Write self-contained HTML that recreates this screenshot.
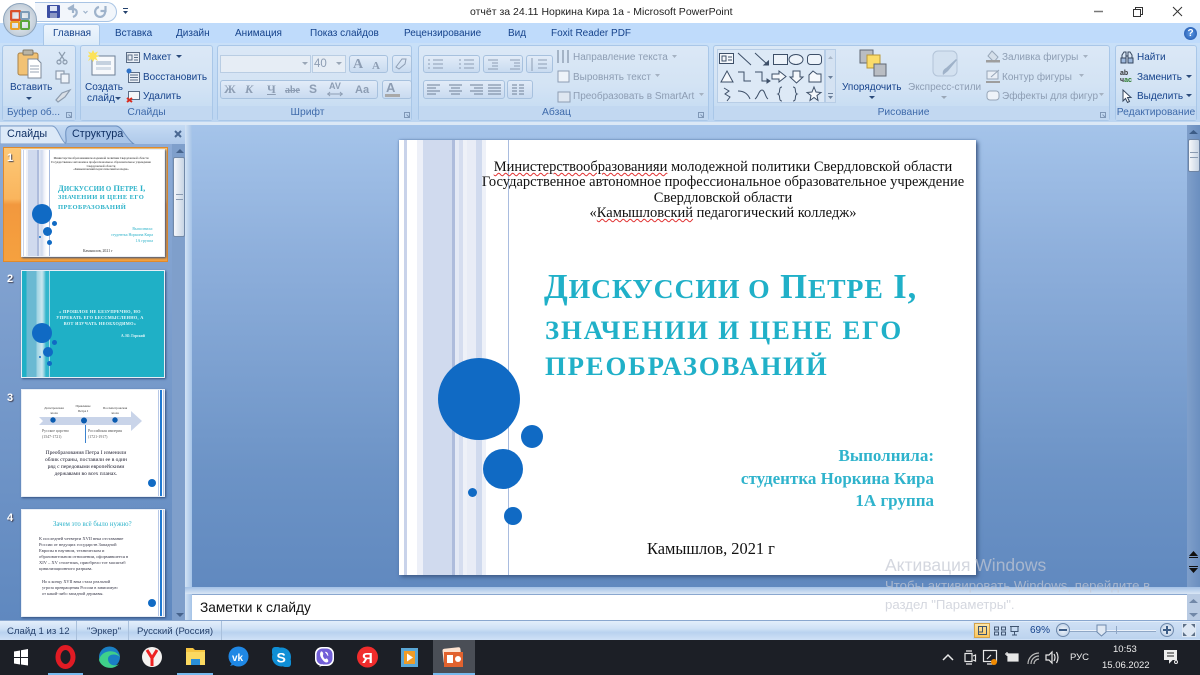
<!DOCTYPE html>
<html><head><meta charset="utf-8"><style>
*{box-sizing:border-box}
html,body{margin:0;padding:0;width:1200px;height:675px;overflow:hidden;background:#fff;font-family:"Liberation Sans",sans-serif}
.a{position:absolute}
.t{position:absolute;white-space:nowrap;font-size:10px;color:#15428b;line-height:13px}
.g{color:#8d9db3}
.grp{position:absolute;top:45px;height:76px;border:1px solid #a9c7e8;border-radius:3px;background:linear-gradient(#dbe8f6 0,#d3e3f4 55%,#c9def3 80%,#c5daf1 100%)}
.lb{position:absolute;left:0;right:0;bottom:0;height:14px;text-align:center;font-size:10.300px;line-height:14px;color:#3e6aaa;background:#c2d8f1;white-space:nowrap}
.tab{position:absolute;top:27px;font-size:10px;color:#15428b;line-height:13px;white-space:nowrap}
.btn{position:absolute;border:1px solid #a7c1de;border-radius:3px;background:linear-gradient(#e2ecf8,#c9dbf0)}
.ser{font-family:"Liberation Serif",serif}
.sl{position:absolute;left:21px;width:144px;height:108px;background:#fff;border:1px solid #e8eef6;box-shadow:1px 1px 2px #33507f}
.n{position:absolute;left:7px;font-size:11px;font-weight:bold;color:#fff;text-shadow:1px 1px 1px #445}
.c{position:absolute;border-radius:50%;background:#106ac4}
</style></head><body>

<!-- ribbon bg -->
<div class="a" style="left:0;top:23px;width:1200px;height:20px;background:#bfdbfb"></div>
<div class="a" style="left:0;top:43px;width:1200px;height:81px;background:linear-gradient(#c9e0f8,#bcd5f1)"></div>

<!-- title bar -->
<div class="a" style="left:35px;top:2px;width:82px;height:20px;border:1px solid #a9c4e4;border-left:0;border-radius:0 11px 11px 0;background:#f2f6fb"></div>
<div class="a" style="left:3px;top:3px;width:34px;height:34px;border-radius:50%;background:radial-gradient(#f4f6f8,#aebdcc);border:1px solid #8ca3bb"></div>
<svg class="a" style="left:10px;top:10px" width="21" height="21"><rect x="1" y="1" width="9" height="9" rx="1" fill="none" stroke="#d9502a" stroke-width="2.500"/><rect x="11" y="2" width="8" height="7" rx="1" fill="none" stroke="#7d9cb8" stroke-width="2"/><rect x="1" y="12" width="8" height="7" rx="1" fill="none" stroke="#e9a227" stroke-width="2"/><rect x="11" y="11" width="8" height="8" rx="1" fill="none" stroke="#5aa63a" stroke-width="2"/></svg>
<svg class="a" style="left:47px;top:5px" width="13" height="13"><rect width="13" height="13" rx="1" fill="#3c4fa3"/><rect x="3" y="1" width="7" height="5" fill="#dfe6f5"/><rect x="3" y="8" width="7" height="5" fill="#8b97c4"/></svg>
<svg class="a" style="left:66px;top:4px" width="45" height="15" fill="none" stroke="#9fb3cb" stroke-width="2.200"><path d="M2 5 L7 2 V9 M3 5 H7 C12 5 12 11 7 13"/><path d="M17.500 7l2 2 2-2" stroke-width="1.200"/><path d="M33 3 A5 5 0 1 0 39 7 M39.500 2v5h-5"/></svg>
<svg class="a" style="left:122px;top:8px" width="7" height="8" fill="#24426e"><rect x="1" y="0" width="5" height="1"/><path d="M1 3h5L3.500 6z"/></svg>
<div class="t" style="left:470px;top:6px;color:#222;font-size:10.500px">отчёт за 24.11 Норкина Кира 1а - Microsoft PowerPoint</div>
<svg class="a" style="left:1090px;top:3px" width="105" height="16" fill="none" stroke="#333"><path d="M4 8.500h9" stroke="#777" stroke-width="1.500"/><path d="M43.500 6.500h7v7h-7zM45.500 6.500v-2h7v7h-2" stroke-width="1"/><path d="M83 4l9 9M92 4l-9 9" stroke-width="1"/></svg>

<!-- tabs -->
<div class="a" style="left:43px;top:24px;width:57px;height:21px;background:linear-gradient(#eef5fd,#dcebf9);border:1px solid #a9c7e8;border-bottom:0;border-radius:3px 3px 0 0"></div>
<div class="tab" style="left:53px">Главная</div>
<div class="tab" style="left:115px">Вставка</div>
<div class="tab" style="left:176px">Дизайн</div>
<div class="tab" style="left:235px">Анимация</div>
<div class="tab" style="left:310px">Показ слайдов</div>
<div class="tab" style="left:404px">Рецензирование</div>
<div class="tab" style="left:508px">Вид</div>
<div class="tab" style="left:551px">Foxit Reader PDF</div>
<div class="a" style="left:1184px;top:27px;width:13px;height:13px;border-radius:50%;background:radial-gradient(#5c9ae6,#1b4fa5);color:#fff;font:bold 10px/13px 'Liberation Sans';text-align:center">?</div>

<!-- groups -->
<div class="grp" style="left:2px;width:74px"><div class="lb" style="text-align:left;padding-left:4px;font-size:10px">Буфер об...</div></div>
<div class="grp" style="left:80px;width:133px"><div class="lb">Слайды</div></div>
<div class="grp" style="left:217px;width:195px"><div class="lb" style="padding-right:14px">Шрифт</div></div>
<div class="grp" style="left:418px;width:291px"><div class="lb" style="padding-right:14px">Абзац</div></div>
<div class="grp" style="left:713px;width:397px"><div class="lb" style="padding-right:16px">Рисование</div></div>
<div class="grp" style="left:1115px;width:82px"><div class="lb">Редактирование</div></div>
<!-- dialog launchers -->
<svg class="a" style="left:0;top:110px" width="1110" height="8" fill="none" stroke="#7f97b6"><path d="M66.500 2.500h5v5h-5zM68.500 4.500l3 3M404.500 2.500h5v5h-5zM406.500 4.500l3 3M698.500 2.500h5v5h-5zM700.500 4.500l3 3M1100.500 2.500h5v5h-5zM1102.500 4.500l3 3"/></svg>

<!-- clipboard -->
<svg class="a" style="left:17px;top:49px" width="28" height="30"><rect x="1" y="4" width="20" height="22" rx="2" fill="#f2c274" stroke="#a8824a"/><rect x="6" y="1" width="10" height="5" rx="1" fill="#b9b4a5" stroke="#7e7868"/><path d="M11 10h9l4 4v15H11z" fill="#fff" stroke="#7e8a9a"/><path d="M13 17h9M13 20h9M13 23h9" stroke="#9aa6b6"/></svg>
<div class="t" style="left:10px;top:81px">Вставить</div>
<svg class="a" style="left:26px;top:97px" width="7" height="4" fill="#2a4a7a"><path d="M0 0h6L3 3z"/></svg>
<svg class="a" style="left:54px;top:49px" width="18" height="56" fill="none" stroke="#8d9cae" stroke-width="1.200"><path d="M5 3l6 9M11 3L5 12"/><circle cx="5" cy="13" r="2"/><circle cx="11" cy="13" r="2"/><rect x="2" y="22" width="8" height="8" fill="#eef3f9"/><rect x="7" y="25" width="8" height="9" fill="#eef3f9"/><path d="M4 53l7-5 5-7-8 3-6 7z" fill="#d9dfe6"/></svg>

<!-- slides group -->
<svg class="a" style="left:88px;top:50px" width="28" height="28"><rect x="4" y="6" width="23" height="19" fill="#f7f9fc" stroke="#6d7f96"/><rect x="8" y="11" width="15" height="4" fill="#c5d1df"/><rect x="8" y="17" width="15" height="3" fill="#d4dde8"/><path d="M5 0l1.500 3L10 1.500 8 5l3.500 1L8 7.500 10 11 6.500 9 5 12 3.500 9 0 11l2-3.500L-1 6l3-1-2-3.500L3.500 3z" fill="#fce25a"/></svg>
<div class="t" style="left:85px;top:81px">Создать</div>
<div class="t" style="left:87px;top:92px">слайд</div>
<svg class="a" style="left:115px;top:97px" width="7" height="4" fill="#2a4a7a"><path d="M0 0h6L3 3z"/></svg>
<svg class="a" style="left:126px;top:51px" width="14" height="52" fill="none" stroke="#5b6d86"><rect x=".5" y="1.500" width="13" height="10" fill="#e9eef5"/><path d="M2 4h4v5H2zM8 4h4M8 6.500h4M8 9h4"/><rect x="2.500" y="21.500" width="11" height="10" fill="#e9eef5"/><path d="M4 24h8M4 26.500h8M4 29h8"/><circle cx="3" cy="20" r="2.500" fill="#2f73c9" stroke="none"/><rect x="2.500" y="40.500" width="11" height="8" fill="#f5f7fa"/><path d="M1 47l5 4M6 47l-5 4" stroke="#d92b1e" stroke-width="2"/></svg>
<div class="t" style="left:143px;top:51px">Макет</div>
<svg class="a" style="left:176px;top:55px" width="7" height="4" fill="#2a4a7a"><path d="M0 0h6L3 3z"/></svg>
<div class="t" style="left:143px;top:71px">Восстановить</div>
<div class="t" style="left:143px;top:90px">Удалить</div>

<!-- font group -->
<div class="a" style="left:220px;top:55px;width:91px;height:18px;background:#e6edf5;border:1px solid #b9cde3"></div>
<div class="a" style="left:312px;top:55px;width:34px;height:18px;background:#e6edf5;border:1px solid #b9cde3"></div>
<div class="t g" style="left:314px;top:58px;font-size:11.500px">40</div>
<svg class="a" style="left:302px;top:62px" width="40" height="5" fill="#9aa7b7"><path d="M0 0h6L3 3zM34 0h6l-3 3z"/></svg>
<div class="btn" style="left:349px;top:55px;width:39px;height:18px"></div>
<div class="t ser g" style="left:353px;top:58px;font-size:14px;font-weight:bold">A</div>
<div class="t ser g" style="left:372px;top:60px;font-size:11px;font-weight:bold">A</div>
<div class="btn" style="left:392px;top:55px;width:20px;height:18px"></div>
<svg class="a" style="left:394px;top:57px" width="15" height="14" fill="none" stroke="#8d9db3"><path d="M2 10 8 2h4l-1 5-6 5z"/></svg>
<div class="btn" style="left:220px;top:80px;width:158px;height:19px"></div>
<div class="t ser g" style="left:224px;top:83px;font-weight:bold;font-size:12px">Ж</div>
<div class="t ser g" style="left:245px;top:83px;font-style:italic;font-weight:bold;font-size:12px">К</div>
<div class="t ser g" style="left:267px;top:83px;font-weight:bold;font-size:12px;text-decoration:underline">Ч</div>
<div class="t ser g" style="left:285px;top:84px;font-weight:bold;font-size:10px;text-decoration:line-through">abe</div>
<div class="t g" style="left:309px;top:83px;font-weight:bold;font-size:12px">S</div>
<div class="t g" style="left:329px;top:80px;font-size:9px;font-weight:bold">AV</div>
<svg class="a" style="left:327px;top:91px" width="17" height="6" fill="none" stroke="#8d9db3"><path d="M0 3h16M3 1 1 3l2 2M13 1l2 2-2 2"/></svg>
<div class="t g" style="left:355px;top:84px;font-size:11px;font-weight:bold">Aa</div>
<div class="btn" style="left:382px;top:80px;width:30px;height:19px"></div>
<div class="t g" style="left:386px;top:81px;font-size:13px;font-weight:bold">A</div>
<div class="a" style="left:385px;top:94px;width:15px;height:3px;background:#a9a9a9"></div>

<!-- para group -->
<div class="btn" style="left:423px;top:55px;width:57px;height:18px"></div>
<div class="btn" style="left:483px;top:55px;width:40px;height:18px"></div>
<div class="btn" style="left:526px;top:55px;width:27px;height:18px"></div>
<div class="btn" style="left:423px;top:80px;width:82px;height:19px"></div>
<div class="btn" style="left:507px;top:80px;width:26px;height:19px"></div>
<svg class="a" style="left:422px;top:54px" width="130" height="48" fill="none" stroke="#8d9db3"><path d="M6 6h2M6 10h2M6 14h2M11 6h10M11 10h10M11 14h10M37 6h2M37 10h2M37 14h2M42 6h10M42 10h10M42 14h10M66 6h10M70 9h6M70 12h6M66 15h10M88 6h10M92 9h6M92 12h6M88 15h10M110 4v13M116 6h9M116 10h9M116 14h9"/><path d="M5 31h13M5 34h9M5 37h13M5 40h9M27 31h13M29 34h9M27 37h13M29 40h9M48 31h13M52 34h9M48 37h13M52 40h9M66 31h13M66 34h13M66 37h13M66 40h13" stroke="#6f8097"/></svg>
<svg class="a" style="left:511px;top:84px" width="14" height="12" fill="none" stroke="#6f8097"><path d="M1 1h5M8 1h5M1 4h5M8 4h5M1 7h5M8 7h5M1 10h5M8 10h5"/></svg>
<svg class="a" style="left:555px;top:49px" width="17" height="58" fill="none" stroke="#8d9db3"><path d="M3 1v13M8 1v13M13 1v13" stroke="#6f8097"/><rect x="3" y="22" width="11" height="11" fill="#eef3f9"/><rect x="3" y="43" width="12" height="10" fill="#dfe7f1"/></svg>
<div class="t g" style="left:573px;top:51px">Направление текста</div>
<div class="t g" style="left:573px;top:71px">Выровнять текст</div>
<div class="t g" style="left:573px;top:90px">Преобразовать в SmartArt</div>
<svg class="a" style="left:650px;top:55px" width="56" height="44" fill="#a5b2c2"><path d="M22 0h5l-2.500 3zM5 19h5l-2.500 3zM49 38h5l-2.500 3z"/></svg>

<!-- shapes -->
<div class="a" style="left:717px;top:49px;width:108px;height:54px;background:#dde9f6;border:1px solid #b7cde6"></div>
<div class="a" style="left:825px;top:49px;width:11px;height:54px;background:#d4e2f2;border:1px solid #b7cde6"></div>
<svg class="a" style="left:717px;top:50px" width="108" height="54" fill="none" stroke="#3d4f68"><rect x="2.500" y="3.500" width="14" height="10" fill="#f5f8fc"/><path d="M5 6h4v5H5zM11 7h4M11 10h4"/><path d="M21 3l13 12M38 3l13 12"/><path d="M47 15h4.500v-4z" fill="#3d4f68"/><rect x="56.500" y="4.500" width="14" height="10" fill="#edf3fa"/><ellipse cx="79" cy="9.500" rx="7" ry="5" fill="#edf3fa"/><rect x="90.500" y="4.500" width="14" height="10" rx="3" fill="#edf3fa"/><path d="M4 32l6-11 6 11z" fill="#f5f8fc"/><path d="M21 22h6v9h7M38 22h7v9h6"/><path d="M50 29l3 2-3 2z" fill="#3d4f68"/><path d="M55 24h7v-3l7 5.500-7 5.500v-3h-7z" fill="#f5f8fc"/><path d="M76 21h7v6h3l-6.500 6-6.500-6h3z" fill="#f5f8fc"/><path d="M92 32V25l4-4 4 3h4v8z" fill="#f5f8fc"/><path d="M7 38l5 3-4 3 5 3-3 4"/><path d="M21 41c6 0 10 3 12 8M38 49c3-2 4-9 7-9s3 7 6 9M65 37c-4 0-1 6-4 7 3 1 0 7 4 7M76 37c4 0 1 6 4 7-3 1 0 7-4 7"/><path d="M97 37l2 5 5 .5-4 3 1 5-4-3-4 3 1-5-4-3 5-.5z" fill="#f5f8fc"/></svg>
<svg class="a" style="left:825px;top:49px" width="11" height="54" fill="#6a7f9a"><path d="M3 10h5L5.500 7z" fill="#a9b7c8"/><path d="M3 27h5l-2.500 3z"/><path d="M3 44h5v1H3zM3 47h5l-2.500 3z"/></svg>

<!-- arrange -->
<svg class="a" style="left:859px;top:49px" width="28" height="29"><rect x="1" y="1" width="13" height="13" fill="#b9bdc3" stroke="#606874"/><rect x="8" y="6" width="13" height="13" fill="#fbdc6a" stroke="#b9973a"/><rect x="15" y="15" width="12" height="12" fill="#b9bdc3" stroke="#606874"/></svg>
<div class="t" style="left:842px;top:81px">Упорядочить</div>
<svg class="a" style="left:869px;top:96px" width="7" height="4" fill="#2a4a7a"><path d="M0 0h6L3 3z"/></svg>
<svg class="a" style="left:931px;top:50px" width="28" height="28"><rect x="2" y="1" width="24" height="25" rx="5" fill="#d3e1f0" stroke="#b3c4d8"/><path d="M26 10 17 21l-5 4c-1-4 1-6 3-7l10-9z" fill="#9fb2c9"/></svg>
<div class="t g" style="left:908px;top:81px">Экспресс-стили</div>
<svg class="a" style="left:941px;top:96px" width="7" height="4" fill="#9aa7b7"><path d="M0 0h6L3 3z"/></svg>
<svg class="a" style="left:985px;top:50px" width="16" height="54" fill="none" stroke="#97a6b8"><path d="M7 1l6 6-4 5-6-6z" fill="#d5dfea"/><rect x="1" y="10" width="14" height="2.500" fill="#9e9e9e" stroke="none"/><path d="M2 21h11v8H2z" fill="#e9eff6"/><path d="M6 27l8-7"/><rect x="1" y="31" width="14" height="2" fill="#9e9e9e" stroke="none"/><rect x="2" y="41" width="12" height="9" rx="3" fill="#eef3f9"/></svg>
<div class="t g" style="left:1002px;top:51px">Заливка фигуры</div>
<div class="t g" style="left:1002px;top:71px">Контур фигуры</div>
<div class="t g" style="left:1002px;top:90px">Эффекты для фигур</div>
<svg class="a" style="left:1074px;top:55px" width="32" height="44" fill="#a5b2c2"><path d="M9 0h5l-2.500 3zM5 19h5l-2.500 3zM25 38h5l-2.500 3z"/></svg>

<!-- edit -->
<svg class="a" style="left:1120px;top:50px" width="16" height="54" fill="none" stroke="#35465e"><path d="M2 12V5l2-3h2v8M12 12V5l-2-3H8v8M6 6h2"/><rect x="1" y="8" width="5" height="5" fill="#9db8dc"/><rect x="8" y="8" width="5" height="5" fill="#9db8dc"/><path d="M3 40v11l2.500-2.500 2 4 2-1-2-4h3.500z" fill="#fff"/></svg>
<div class="t" style="left:1120px;top:70px;font-size:7px;line-height:7px;color:#333;font-weight:bold">ab<br>ч<span style="color:#2a7a2a">ас</span></div>
<div class="t" style="left:1137px;top:51px">Найти</div>
<div class="t" style="left:1137px;top:71px">Заменить</div>
<div class="t" style="left:1137px;top:90px">Выделить</div>
<svg class="a" style="left:1186px;top:75px" width="7" height="24" fill="#2a4a7a"><path d="M0 0h6L3 3zM0 19h6L3 22z"/></svg>

<!-- body bg -->
<div class="a" style="left:0;top:123px;width:1200px;height:499px;background:linear-gradient(#a5c4ea 0,#8fb0dc 25%,#6c93c6 70%,#5d86bd 100%)"></div>
<div class="a" style="left:0;top:122px;width:1200px;height:3px;background:#dbe8f6"></div>

<!-- left pane -->
<div class="a" style="left:0;top:125px;width:185px;height:19px;background:linear-gradient(#c4daf3,#afc9ea)"></div>
<svg class="a" style="left:0;top:125px" width="140" height="20"><path d="M64 19 C70 19 60 1 72 1H116 C122 1 126 14 134 19Z" fill="#a9c5e8" stroke="#6b8fbf"/><path d="M0 19V1H52C58 1 60 15 66 19Z" fill="#dce9f8" stroke="#7c9cc6"/></svg>
<div class="t" style="left:7px;top:128px;font-size:10.800px;color:#0f2f63">Слайды</div>
<div class="t" style="left:72px;top:128px;font-size:10.800px;color:#0f2f63">Структура</div>
<svg class="a" style="left:174px;top:130px" width="8" height="8" stroke="#4a6892" stroke-width="2"><path d="M1 1l6 6M7 1l-6 6"/></svg>
<div class="a" style="left:0;top:144px;width:172px;height:478px;background:linear-gradient(#8dabd6,#5f88bf)"></div>
<div class="a" style="left:172px;top:144px;width:13px;height:478px;background:#7f9fcb"></div>
<div class="a" style="left:185px;top:125px;width:7px;height:497px;background:linear-gradient(90deg,#d3e3f5,#a5c3e7)"></div>
<div class="a" style="left:173px;top:157px;width:12px;height:80px;background:linear-gradient(90deg,#f4f6fa,#c8d5e5);border:1px solid #7289a8;border-radius:2px"></div>
<div class="a" style="left:176px;top:194px;width:7px;height:6px;border-top:1px solid #8a9bb2;border-bottom:1px solid #8a9bb2"></div>
<svg class="a" style="left:175px;top:148px" width="10" height="6" fill="#46638c"><path d="M1 5h8L5 1z"/></svg>
<svg class="a" style="left:175px;top:612px" width="10" height="6" fill="#46638c"><path d="M1 1h8L5 5z"/></svg>

<div class="a" style="left:3px;top:147px;width:165px;height:115px;background:linear-gradient(#fcc877 0,#fab55d 45%,#f2983e 50%,#f5a13f 100%);border:1px solid #e08a2c"></div>

<div class="n" style="top:152px;color:#fff">1</div>
<div class="n" style="top:273px">2</div>
<div class="n" style="top:392px">3</div>
<div class="n" style="top:512px">4</div>

<!-- thumb 1 -->
<div class="sl" style="top:149px;overflow:hidden">
<div class="a" style="left:0;top:0;width:27px;height:108px;background:linear-gradient(90deg,#fff 0,#fff 1px,#c9d3ea 1px,#c9d3ea 2px,#fff 2px,#fff 4px,#edf0f8 4px,#edf0f8 6px,#d0daee 6px,#d0daee 15px,#aebcdc 15px,#aebcdc 17px,#e2e8f4 17px,#d0daee 20px,#edf0f8 22px,#fff 25px)"></div>
<div class="a" style="left:27px;top:0;width:1px;height:108px;background:#a9bcdf"></div>
<div class="c" style="left:10px;top:54px;width:20px;height:20px"></div>
<div class="c" style="left:30px;top:71px;width:5px;height:5px"></div>
<div class="c" style="left:21px;top:77px;width:9px;height:9px"></div>
<div class="c" style="left:17px;top:86px;width:2px;height:2px"></div>
<div class="c" style="left:25px;top:90px;width:5px;height:5px"></div>
<div class="t ser" style="left:14px;top:7px;width:130px;text-align:center;font-size:3px;line-height:3.800px;color:#222">Министерствообразованияи молодежной политики Свердловской области<br>Государственное автономное профессиональное образовательное учреждение<br>Свердловской области<br>«Камышловский педагогический колледж»</div>
<div class="t ser" style="left:36px;top:33px;font-size:8.500px;line-height:10px;font-weight:bold;color:#2bb2c9">Д<span style="font-size:6.800px">ИСКУССИИ О</span> П<span style="font-size:6.800px">ЕТРЕ</span> I,</div>
<div class="t ser" style="left:36px;top:43px;font-size:6.500px;line-height:9.500px;font-weight:bold;color:#2bb2c9;letter-spacing:.4px">ЗНАЧЕНИИ И ЦЕНЕ ЕГО<br>ПРЕОБРАЗОВАНИЙ</div>
<div class="t ser" style="left:70px;top:76px;width:61px;text-align:right;font-size:4px;line-height:5.800px;color:#2bb2c9">Выполнила:<br>студентка Норкина Кира<br>1А группа</div>
<div class="t ser" style="left:61px;top:99px;font-size:3.800px;line-height:4px;color:#333">Камышлов, 2021 г</div>
</div>

<!-- thumb 2 -->
<div class="sl" style="top:270px;overflow:hidden;background:#1fb0c6">
<div class="a" style="left:0;top:0;width:27px;height:108px;background:linear-gradient(90deg,#1fb0c6 0,#1fb0c6 4px,#6ab9d2 5px,#6ab9d2 14px,#9fd3e2 15px,#c9e7ef 20px,#8ed0df 22px,#32b6cc 24px)"></div>
<div class="a" style="left:27px;top:0;width:1px;height:108px;background:#a6dbe6"></div>
<div class="c" style="left:10px;top:52px;width:20px;height:20px"></div>
<div class="c" style="left:30px;top:69px;width:5px;height:5px"></div>
<div class="c" style="left:21px;top:76px;width:10px;height:10px"></div>
<div class="c" style="left:17px;top:85px;width:2px;height:2px"></div>
<div class="c" style="left:25px;top:90px;width:5px;height:5px"></div>
<div class="t ser" style="left:28px;top:38px;width:100px;text-align:center;font-size:4.300px;line-height:6px;font-weight:bold;color:#eafafc;letter-spacing:.3px">«&nbsp;ПРОШЛОЕ НЕ БЕЗУПРЕЧНО, НО<br>УПРЕКАТЬ ЕГО БЕССМЫСЛЕННО, А<br>ВОТ ИЗУЧАТЬ НЕОБХОДИМО»</div>
<div class="t ser" style="left:99px;top:63px;font-size:3.600px;line-height:4px;color:#e6f7fa;font-weight:bold">А. Ю. Горский</div>
</div>

<!-- thumb 3 -->
<div class="sl" style="top:389px;overflow:hidden">
<div class="a" style="left:136px;top:0;width:1px;height:108px;background:#b8c8e6"></div>
<div class="a" style="left:138px;top:0;width:2px;height:108px;background:#1f78d0"></div>
<div class="a" style="left:141px;top:0;width:1px;height:108px;background:#b8c8e6"></div>
<svg class="a" style="left:17px;top:21px" width="104" height="20"><path d="M0 6H92V0L103 10 92 20V14H0L4 10Z" fill="#c9d4e9"/><circle cx="14" cy="9" r="2.700" fill="#0b5cb0"/><circle cx="45" cy="9.500" r="3" fill="#0b5cb0"/><circle cx="76" cy="9" r="2.700" fill="#0b5cb0"/></svg>
<div class="a" style="left:63px;top:35px;width:1px;height:18px;background:#3a82cf"></div>
<div class="t ser" style="left:12px;top:16px;width:40px;text-align:center;font-size:3.300px;line-height:4.500px;color:#333">Допетровская<br>эпоха</div>
<div class="t ser" style="left:41px;top:14px;width:40px;text-align:center;font-size:3.300px;line-height:4.500px;color:#333">Правление<br>Петра I</div>
<div class="t ser" style="left:73px;top:16px;width:40px;text-align:center;font-size:3.300px;line-height:4.500px;color:#333">Послепетровская<br>эпоха</div>
<div class="t ser" style="left:20px;top:39px;font-size:3.900px;line-height:5.800px;color:#555">Русское царство<br>(1547-1721)</div>
<div class="t ser" style="left:66px;top:39px;font-size:3.900px;line-height:5.800px;color:#555">Российская империя<br>(1721-1917)</div>
<div class="t ser" style="left:14px;top:60px;width:100px;text-align:center;font-size:5.500px;line-height:7px;color:#223">Преобразования Петра I изменили<br>облик страны, поставили ее в один<br>ряд с передовыми европейскими<br>державами во всех планах.</div>
<div class="c" style="left:126px;top:89px;width:8px;height:8px"></div>
</div>

<!-- thumb 4 -->
<div class="sl" style="top:509px;overflow:hidden">
<div class="a" style="left:136px;top:0;width:1px;height:108px;background:#b8c8e6"></div>
<div class="a" style="left:138px;top:0;width:2px;height:108px;background:#1f78d0"></div>
<div class="a" style="left:141px;top:0;width:1px;height:108px;background:#b8c8e6"></div>
<div class="t ser" style="left:31px;top:11px;font-size:6.800px;line-height:7px;color:#2bb2c9">Зачем это всё было нужно?</div>
<div class="t ser" style="left:17px;top:26px;font-size:4.500px;line-height:6px;color:#334">К последней четверти XVII века отставание<br>России от ведущих государств Западной<br>Европы в научном, техническом и<br>образовательном отношении, оформившееся в<br>XIV – XV столетиях, приобрело тот масштаб<br>цивилизационного разрыва.</div>
<div class="t ser" style="left:20px;top:69px;font-size:4.300px;line-height:6px;color:#334">Но к концу XVII века стала реальной<br>угроза превращения России в зависимую<br>от какой-либо западной державы.</div>
<div class="c" style="left:126px;top:89px;width:8px;height:8px"></div>
</div>

<!-- main scrollbar -->
<div class="a" style="left:1187px;top:125px;width:13px;height:467px;background:linear-gradient(90deg,#7f9fca,#6b8fc0)"></div>
<svg class="a" style="left:1188px;top:128px" width="11" height="7" fill="#3c5c86"><path d="M1 6h9L5.500 2z"/></svg>
<div class="a" style="left:1188px;top:139px;width:12px;height:33px;background:linear-gradient(90deg,#f5f7fa,#c7d4e4);border:1px solid #6d84a4;border-radius:2px"></div>
<div class="a" style="left:1190px;top:152px;width:8px;height:6px;border-top:1px solid #8a9bb2;border-bottom:1px solid #8a9bb2"></div>
<svg class="a" style="left:1188px;top:550px" width="11" height="24" fill="#111"><path d="M1 6h9L5.500 1zM1 7h9v1H1zM1 16h9v1H1zM1 18h9L5.500 23z"/></svg>

<!-- slide -->
<div class="a" style="left:399px;top:140px;width:577px;height:435px;background:#fff;box-shadow:2px 2px 4px #3e5a86,0 0 2px #5b7db0;overflow:hidden">
  <div class="a" style="left:5px;top:0;width:3px;height:435px;background:#c9d3ea"></div>
  <div class="a" style="left:18px;top:0;width:6px;height:435px;background:#edf0f8"></div>
  <div class="a" style="left:24px;top:0;width:29px;height:435px;background:#d0daee"></div>
  <div class="a" style="left:53px;top:0;width:3px;height:435px;background:#aebcdc"></div>
  <div class="a" style="left:56px;top:0;width:4px;height:435px;background:#e4e9f5"></div>
  <div class="a" style="left:60px;top:0;width:4px;height:435px;background:#d5ddef"></div>
  <div class="a" style="left:64px;top:0;width:4px;height:435px;background:#eef1f8"></div>
  <div class="a" style="left:68px;top:0;width:9px;height:435px;background:#e8ecf6"></div>
  <div class="a" style="left:77px;top:0;width:6px;height:435px;background:#d0daee"></div>
  <div class="a" style="left:83px;top:0;width:4px;height:435px;background:#eef1f8"></div>
  <div class="a" style="left:109px;top:0;width:1px;height:435px;background:#a9bcdf"></div>

  <div class="c" style="left:39px;top:218px;width:82px;height:82px"></div>
  <div class="c" style="left:122px;top:285px;width:22px;height:23px"></div>
  <div class="c" style="left:84px;top:309px;width:40px;height:40px"></div>
  <div class="c" style="left:69px;top:348px;width:9px;height:9px"></div>
  <div class="c" style="left:105px;top:367px;width:18px;height:18px"></div>

  <div class="a ser" style="left:26px;top:20px;width:596px;text-align:center;font-size:14.500px;line-height:15.300px;color:#111;white-space:nowrap">
    <span style="text-decoration:underline wavy #e03030 1px">Министерствообразованияи</span> молодежной политики Свердловской области<br>
    Государственное автономное профессиональное образовательное учреждение<br>
    Свердловской области<br>
    «<span style="text-decoration:underline wavy #e03030 1px">Камышловский</span> педагогический колледж»
  </div>
  <div class="t ser" style="left:145px;top:125px;font-weight:bold;color:#20b0c8;font-size:34.500px;line-height:44px;letter-spacing:.9px">Д<span style="font-size:27.700px">ИСКУССИИ О</span> П<span style="font-size:27.700px">ЕТРЕ</span> I,</div>
  <div class="t ser" style="left:146px;top:172px;font-weight:bold;color:#20b0c8;font-size:26.800px;line-height:36px;letter-spacing:1.800px">ЗНАЧЕНИИ И ЦЕНЕ ЕГО</div>
  <div class="t ser" style="left:146px;top:208px;font-weight:bold;color:#20b0c8;font-size:26.800px;line-height:36px;letter-spacing:1.800px">ПРЕОБРАЗОВАНИЙ</div>
  <div class="a ser" style="left:235px;top:305px;width:300px;text-align:right;font-weight:bold;color:#2fb3cc;font-size:17px;line-height:22.500px;white-space:nowrap">Выполнила:<br>студентка Норкина Кира<br>1А группа</div>
  <div class="t ser" style="left:248px;top:400px;font-size:16.400px;line-height:18px;color:#111">Камышлов, 2021 г</div>
</div>

<!-- notes -->
<div class="a" style="left:185px;top:587px;width:1015px;height:7px;background:linear-gradient(#a4c1e6,#d9e6f5)"></div>
<div class="a" style="left:192px;top:594px;width:995px;height:26px;background:#fff;border-top:1px solid #8aa7cf"></div>
<div class="t" style="left:200px;top:600px;font-size:13.700px;line-height:16px;color:#111">Заметки к слайду</div>
<div class="a" style="left:1187px;top:594px;width:13px;height:26px;background:#b9cbe3"></div>
<svg class="a" style="left:1188px;top:597px" width="11" height="22" fill="#7188a8"><path d="M1 6h9L5.500 2zM1 16h9l-4.500 4z"/></svg>

<!-- status -->
<div class="a" style="left:0;top:620px;width:1200px;height:20px;background:linear-gradient(#e3eefb 0,#cfe1f6 40%,#b9d2ef 60%,#cfe1f6 100%);border-top:1px solid #8aa7cf"></div>
<div class="a" style="left:76px;top:621px;width:1px;height:19px;background:#a9c0dc"></div>
<div class="a" style="left:128px;top:621px;width:1px;height:19px;background:#a9c0dc"></div>
<div class="a" style="left:221px;top:621px;width:1px;height:19px;background:#a9c0dc"></div>
<div class="t" style="left:7px;top:625px;font-size:9.600px;color:#243f6a">Слайд 1 из 12</div>
<div class="t" style="left:87px;top:625px;font-size:9.600px;color:#243f6a">"Эркер"</div>
<div class="t" style="left:137px;top:625px;font-size:9.600px;color:#243f6a">Русский (Россия)</div>
<div class="a" style="left:973px;top:622px;width:227px;height:17px;background:linear-gradient(#cfe0f5,#bcd3ee)"></div>
<div class="a" style="left:974px;top:623px;width:16px;height:15px;background:linear-gradient(#fde6a8,#fbc65c);border:1px solid #d4a24b"></div>
<svg class="a" style="left:974px;top:623px" width="60" height="15" fill="none" stroke="#3f5470"><path d="M4.500 3.500h8v8h-8zM4.500 9h4V3.500"/><path d="M20.500 4h4v3h-4zM27.500 4h4v3h-4zM20.500 9h4v3h-4zM27.500 9h4v3h-4z"/><path d="M36 3.500h9M37 3.500v5h7v-5M40.500 8.500v3M38 12h5"/></svg>
<div class="t" style="left:1030px;top:624px;font-size:10px">69%</div>
<div class="a" style="left:1056px;top:630px;width:100px;height:2px;background:#eaf1fa;border-bottom:1px solid #8fa7c6"></div>
<div class="a" style="left:1056px;top:623px;width:14px;height:14px;border-radius:50%;background:radial-gradient(#f2f6fb,#b3c8e2);border:1px solid #6e89ac"></div>
<div class="a" style="left:1059px;top:629px;width:8px;height:2px;background:#3c5c86"></div>
<div class="a" style="left:1160px;top:623px;width:14px;height:14px;border-radius:50%;background:radial-gradient(#f2f6fb,#b3c8e2);border:1px solid #6e89ac"></div>
<div class="a" style="left:1163px;top:629px;width:8px;height:2px;background:#3c5c86"></div>
<div class="a" style="left:1166px;top:626px;width:2px;height:8px;background:#3c5c86"></div>
<svg class="a" style="left:1096px;top:624px" width="12" height="13"><path d="M1 1h9v7l-4.500 4L1 8z" fill="#dfe8f3" stroke="#6e89ac"/></svg>
<div class="a" style="left:1116px;top:626px;width:1px;height:8px;background:#8fa7c6"></div>
<svg class="a" style="left:1182px;top:623px" width="14" height="14" fill="#5e7086"><rect width="14" height="14" fill="#dde7f3"/><path d="M1 1h4L1 5zM13 1H9l4 4zM1 13h4l-4-4zM13 13H9l4-4z"/></svg>

<!-- taskbar -->
<div class="a" style="left:0;top:640px;width:1200px;height:35px;background:#1c1f26"></div>
<div class="a" style="left:433px;top:640px;width:42px;height:35px;background:#4a4e56"></div>
<div class="a" style="left:48px;top:673px;width:35px;height:2px;background:#76b9ed"></div>
<div class="a" style="left:177px;top:673px;width:36px;height:2px;background:#76b9ed"></div>
<div class="a" style="left:433px;top:673px;width:42px;height:2px;background:#76b9ed"></div>
<svg class="a" style="left:0;top:640px" width="480" height="35">
<path d="M14 11.500 20 10.500V17H14zM21 10.300 28 9V17H21zM14 18H20V24.500L14 23.500zM21 18H28V25.500L21 24.500z" fill="#fff"/>
<ellipse cx="65.500" cy="17" rx="7.500" ry="9.500" fill="none" stroke="#e01b24" stroke-width="5"/>
<circle cx="109.500" cy="17" r="10.500" fill="#1a7fc4"/><path d="M99 20C101 10 116 8 120 17 116 13 108 14 108 19 108 25 115 27 119 24 113 31 101 28 99 20Z" fill="#3fd08a"/>
<circle cx="152" cy="17" r="10" fill="#f4f2f0"/><path d="M147 10l5 8 5-8M152 18v8" fill="none" stroke="#e22" stroke-width="3"/>
<path d="M186 8h7l2 2h10v4H186z" fill="#f5c542"/><rect x="186" y="12" width="19" height="13" fill="#fbd961"/><rect x="191" y="19" width="9" height="6" fill="#2a8fd8"/>
<circle cx="238.500" cy="16.500" r="10" fill="#1f88e5"/><path d="M230 26l3-4 4 2z" fill="#1f88e5"/>
<circle cx="281.500" cy="17" r="9.500" fill="#0f8fd6"/><rect x="272" y="7" width="9" height="9" rx="3" fill="#0f8fd6"/><rect x="282" y="18" width="9" height="9" rx="3" fill="#0f8fd6"/>
<rect x="315" y="7" width="19" height="19" rx="7" fill="#fff"/><rect x="316.500" y="8.500" width="16" height="16" rx="6" fill="#7360d8"/><path d="M319 27l3-3 2 1z" fill="#fff"/><path d="M321 12c1-1 2 1 2 2s-1 1 0 3 2 3 3 2 2 1 2 2-2 2-4 0-5-6-3-9zM325 12c2 0 3 1 3 4" stroke="#fff" fill="#fff" stroke-width=".6"/>
<circle cx="367.500" cy="17" r="10.500" fill="#f12c2c"/>
<rect x="401" y="8" width="17" height="19" fill="#5aa7d6"/><rect x="404" y="11" width="11" height="13" fill="#f09c27"/><path d="M407 13.500l6 4-6 4z" fill="#fff"/>
<rect x="443" y="8" width="18" height="15" rx="2" fill="#fde2cf" transform="rotate(-6 452 15)"/><rect x="444" y="12" width="19" height="15" fill="#e2622e"/><rect x="447" y="15" width="6" height="8" fill="#fff"/><circle cx="458" cy="19" r="3" fill="#fff"/>
<text x="232" y="21" font-family="Liberation Sans" font-size="10" font-weight="bold" fill="#fff">vk</text>
<text x="276.500" y="22.500" font-family="Liberation Sans" font-size="14" font-weight="bold" fill="#fff">S</text>
<text x="362" y="23" font-family="Liberation Sans" font-size="15" font-weight="bold" fill="#fff">Я</text>
</svg>

<svg class="a" style="left:940px;top:645px" width="125" height="26" fill="none" stroke="#e8e8e8" stroke-width="1.200"><path d="M3 15l5-5 5 5" stroke-width="1.500"/><rect x="25" y="8.500" width="7" height="8"/><path d="M26 6h6M26 19h6M33 11l2.500-1v6l-2.500-1"/><rect x="43.500" y="5.500" width="13" height="11"/><path d="M47 14l4-4M47 19h7"/><circle cx="54" cy="17" r="3" fill="#f08a00" stroke="none"/><rect x="68" y="9" width="10" height="7" fill="#e8e8e8"/><path d="M65 9h4M67 7v4"/><path d="M88 19a11 11 0 0 1 11-11M91 19a8 8 0 0 1 8-8M94 19a5 5 0 0 1 5-5" stroke="#bbb"/><path d="M106 10h3l3-3v11l-3-3h-3zM114 9q2 3.500 0 7M116.500 7q3 5.500 0 11"/></svg>
<div class="t" style="left:1070px;top:651px;color:#eee;font-size:9.500px">РУС</div>
<div class="t" style="left:1113px;top:643px;color:#eee;font-size:9.500px">10:53</div>
<div class="t" style="left:1102px;top:659px;color:#eee;font-size:9.500px">15.06.2022</div>
<svg class="a" style="left:1163px;top:649px" width="16" height="16" fill="none" stroke="#eee"><path d="M1.500 1.500h12v9h-4l-3 3v-3h-5z" fill="#eee"/><path d="M4 4h7M4 7h7" stroke="#222"/><circle cx="13" cy="13" r="1.500"/></svg>

<!-- watermark -->
<div class="t" style="left:885px;top:555px;font-size:17.500px;line-height:20px;color:rgba(195,200,210,.72)">Активация Windows</div>
<div class="t" style="left:885px;top:576px;font-size:13.200px;line-height:19px;color:rgba(195,200,210,.72)">Чтобы активировать Windows, перейдите в<br>раздел "Параметры".</div>

</body></html>
